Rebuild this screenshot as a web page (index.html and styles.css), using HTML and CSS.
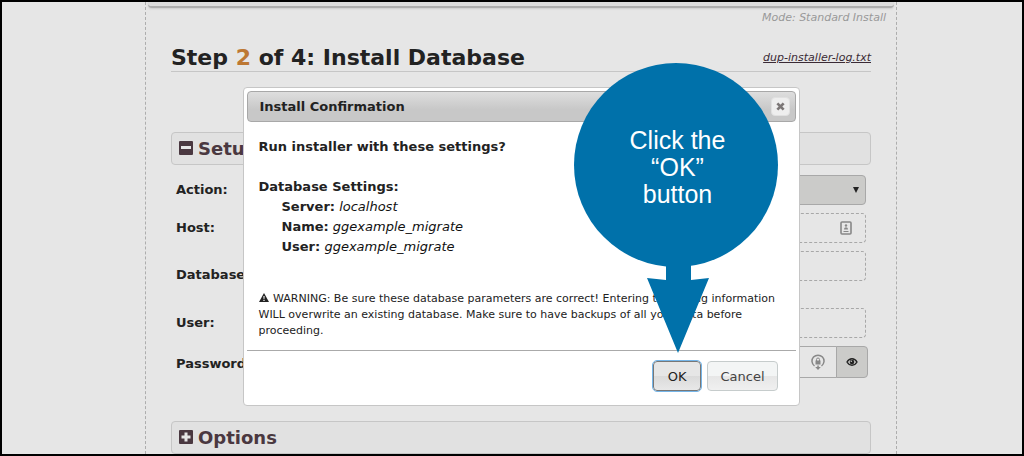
FILE: index.html
```html
<!DOCTYPE html>
<html lang="en">
  <head>
    <meta charset="UTF-8" />
    <meta name="viewport" content="width=device-width, initial-scale=1.0" />
    <title>Install Database</title>
    <link rel="stylesheet" href="styles.css" />
  </head>

  <body>
    <div class="content">
      <div class="header-bar"></div>
      <div class="mode">Mode: Standard Install</div>

      <main>
        <header class="step-header">
          <h1>Step <span class="step">2</span> of 4: Install Database</h1>
          <a class="log-link" href="#">dup-installer-log.txt</a>
        </header>

        <h2 class="section-title">
          <svg class="toggle" viewBox="0 0 14 14"><rect width="14" height="14" rx="1" fill="#4a3840" /><rect x="2" y="5" width="10" height="3" fill="#e6e6e6" /></svg>
          Setup
        </h2>

        <form class="settings">
          <div class="row">
            <label for="action">Action:</label>
            <div class="field">
              <select id="action">
                <option>Connect and Remove All Data</option>
              </select>
              <svg class="caret" viewBox="0 0 6 6"><path d="M0 0h6L3 6z" fill="#222" /></svg>
            </div>
          </div>
          <div class="row">
            <label for="host">Host:</label>
            <div class="field">
              <input type="text" id="host" />
              <svg class="field-icon" viewBox="0 0 12 14"><rect x="1" y="1" width="10" height="12" rx="1" fill="none" stroke="#888" stroke-width="1.6" /><circle cx="6" cy="4.5" r="1.2" fill="#888" /><path d="M4 8.5c0-3 4-3 4 0zM3.5 10h5v1h-5z" fill="#888" /></svg>
            </div>
          </div>
          <div class="row row-tall">
            <label for="database">Database:</label>
            <div class="field"><input type="text" id="database" /></div>
          </div>
          <div class="row">
            <label for="user">User:</label>
            <div class="field"><input type="text" id="user" /></div>
          </div>
          <div class="row row-password">
            <label for="password">Password:</label>
            <div class="field">
              <input type="password" id="password" />
              <svg class="key-icon" viewBox="0 0 14 16"><path d="M3.5 12A6 6 0 1 1 10.5 12" fill="none" stroke="#888" stroke-width="1.5" /><rect x="4.5" y="6.5" width="5" height="4" fill="#888" /><path d="M5.500 7V5.500a1.500 1.500 0 0 1 3 0V7" fill="none" stroke="#888" /><path d="M6.300 11.500h1.500v1.500h2l-2.800 3-2.800-3h2.100z" fill="#888" /></svg>
              <button type="button" class="show-btn" aria-label="Show password">
                <svg viewBox="0 0 12 10"><path d="M1 5c2.500-4.300 7.500-4.300 10 0-2.500 4.300-7.500 4.300-10 0z" fill="none" stroke="#222" stroke-width="1.400" /><circle cx="6" cy="5" r="2.300" fill="#222" /><circle cx="5.300" cy="4.200" r=".8" fill="#cbcbc9" /></svg>
              </button>
            </div>
          </div>
        </form>

        <h2 class="section-title">
          <svg class="toggle" viewBox="0 0 14 14"><rect width="14" height="14" rx="1" fill="#4a3840" /><path d="M5.500 2.500h3v3h3v3h-3v3h-3v-3h-3v-3h3z" fill="#e6e6e6" /></svg>
          Options
        </h2>
      </main>

      <div class="dialog" role="dialog" aria-labelledby="dialog-title">
        <div class="dialog-titlebar">
          <span id="dialog-title">Install Confirmation</span>
          <button type="button" class="close-btn" aria-label="Close">
            <svg viewBox="0 0 10 10"><path d="M1.500 1.500l7 7M8.500 1.500l-7 7" stroke="#7c7777" stroke-width="3" /></svg>
          </button>
        </div>

        <div class="dialog-body">
          <p class="question"><b>Run installer with these settings?</b></p>
          <b>Database Settings:</b>
          <ul>
            <li><b>Server:</b> <i>localhost</i></li>
            <li><b>Name:</b> <i>ggexample_migrate</i></li>
            <li><b>User:</b> <i>ggexample_migrate</i></li>
          </ul>
          <p class="warning">
            <svg viewBox="0 0 10 9"><path d="M5 0l5 9H0z" fill="#222" /><path d="M4.400 3h1.200l-.2 3h-.8zM4.400 6.700h1.200v1.200H4.400z" fill="#fff" /></svg>
            WARNING: Be sure these database parameters are correct! Entering the wrong information WILL overwrite an existing database. Make sure to have backups of all your data before proceeding.
          </p>
        </div>

        <div class="dialog-buttons">
          <button type="button" class="btn btn-ok">OK</button>
          <button type="button" class="btn">Cancel</button>
        </div>

        <div class="callout">
          <svg viewBox="0 0 204 290" fill="#0071aa"><circle cx="102" cy="102" r="102" /><path d="M92 200h25v17l18-2-31 75-31-75 19 2z" /></svg>
          <p>Click the<br />&ldquo;OK&rdquo;<br />button</p>
        </div>
      </div>
    </div>
  </body>
</html>
```

FILE: styles.css
```css
* {
  box-sizing: border-box;
}

body {
  margin: 0;
  min-height: 100vh;
  padding-left: 18px;
  border: 2px solid #000;
  background: #e6e6e6;
  color: #222;
  font-family: Verdana, "DejaVu Sans", sans-serif;
  font-size: 13px;
  display: flex;
  justify-content: center;
}

h1,
h2,
p,
ul {
  margin: 0;
  padding: 0;
}

svg {
  display: block;
}

.content {
  position: relative;
  width: 100%;
  max-width: 752px;
  border: 1px dashed #adadad;
  border-width: 0 1px;
}

.header-bar {
  height: 6px;
  margin: 0 2px;
  background: #dcdcdc;
  border-bottom: 2px solid #adadad;
  border-radius: 0 0 4px 4px;
  box-shadow: 0 1px 2px #ccc;
}

.mode {
  margin-top: 2px;
  padding-right: 10px;
  color: #999;
  font-size: 11px;
  font-style: italic;
  line-height: 16px;
  text-align: right;
}

main {
  padding: 0 25px;
}

/* Step heading */
.step-header {
  display: flex;
  justify-content: space-between;
  align-items: center;
  height: 28px;
  margin: 18px 0 60px;
  border-bottom: 1px solid #c6c6c6;
}

h1 {
  font-size: 22px;
}

.step {
  color: #bd7833;
}

.log-link {
  color: #3a2a35;
  font-size: 11px;
  font-style: italic;
}

/* Sections */
.section-title {
  display: flex;
  align-items: center;
  gap: 5px;
  height: 33px;
  padding: 0 7px 1px;
  border: 1px solid #c6c6c6;
  border-radius: 4px;
  background: #e1e1e1;
  color: #4a3840;
  font-size: 18px;
}

.toggle {
  width: 14px;
  height: 14px;
}

.settings {
  padding: 6px 5px 35px;
}

.row {
  display: flex;
  align-items: center;
  height: 38px;
}

.row label {
  width: 125px;
  padding-bottom: 2px;
  font-weight: bold;
}

.row-tall {
  height: 57px;
}

.row-tall .field {
  align-self: flex-start;
  margin-top: 4px;
}

.row-password {
  height: 44px;
}

.field {
  position: relative;
  flex: 1;
  display: flex;
}

.field input,
.field select {
  width: 100%;
  height: 30px;
  padding: 0 8px;
  border: 1px dashed #a8a8a8;
  border-radius: 4px;
  background: #e6e6e6;
  font: inherit;
}

.field select {
  appearance: none;
  border-style: solid;
  background: #cbcbc9;
}

.caret {
  position: absolute;
  top: 12px;
  right: 7px;
  width: 6px;
  height: 6px;
}

.field-icon {
  position: absolute;
  top: 8px;
  right: 14px;
  width: 12px;
  height: 14px;
}

.row-password .field {
  margin: 0 -2px 4px 0;
}

.row-password input {
  flex: 1;
  height: 32px;
  border: 1px solid #a8a8a8;
  border-radius: 4px 0 0 4px;
}

.key-icon {
  position: absolute;
  top: 8px;
  right: 43px;
  width: 14px;
  height: 16px;
}

.show-btn {
  width: 32px;
  height: 32px;
  margin-left: -1px;
  padding: 0 9px;
  border: 1px solid #a8a8a8;
  border-radius: 0 4px 4px 0;
  background: #cbcbc9;
}

/* Confirmation dialog */
.dialog {
  position: absolute;
  top: 85px;
  left: 0;
  right: 0;
  width: 557px;
  max-width: 100%;
  margin: 0 auto;
  padding: 3px;
  border: 1px solid #c6c6c6;
  border-radius: 4px;
  background: #fff;
}

.dialog-titlebar {
  display: flex;
  justify-content: space-between;
  align-items: center;
  height: 31px;
  padding: 0 5px 0 12px;
  border: 1px solid #a8a8a8;
  border-radius: 4px;
  background: linear-gradient(#dedede, #c8c8c8 60%);
  font-weight: bold;
}

.close-btn {
  width: 19px;
  height: 19px;
  padding: 4px;
  border: 1px solid #e0e0e0;
  border-radius: 4px;
  background: #eee;
}

.dialog-body {
  padding: 15px 12px 11px;
  line-height: 20px;
}

.question {
  margin-bottom: 20px;
}

.dialog-body ul {
  padding-left: 23px;
  list-style: none;
}

.dialog-body i {
  color: #111;
}

.warning {
  margin-top: 34px;
  font-size: 11px;
  line-height: 16px;
}

.warning svg {
  display: inline-block;
  width: 10px;
  height: 9px;
  margin-right: 1px;
}

.dialog-buttons {
  display: flex;
  justify-content: flex-end;
  gap: 6px;
  padding: 10px 18px 11px;
  border-top: 1px solid #aaa;
}

.btn {
  height: 30px;
  padding: 0 12px;
  border: 1px solid #c6cccc;
  border-radius: 4px;
  background: linear-gradient(#f3f5f5 50%, #e6e6e6 50%, #f0f0f0);
  color: #444;
  font: inherit;
}

.btn-ok {
  padding: 0 14px;
  border: 1px solid #777;
  outline: 1px solid #75b5e8;
  background: linear-gradient(#e6e6e6 50%, #dadada 50%, #e8e8e8);
  color: #222;
}

/* Callout bubble pointing at the OK button */
.callout {
  position: absolute;
  top: -25px;
  right: 21px;
  width: 204px;
}

.callout p {
  position: absolute;
  top: 64px;
  left: 4px;
  right: 0;
  color: #fff;
  font-family: Arial, "Liberation Sans", sans-serif;
  font-size: 25px;
  line-height: 27px;
  text-align: center;
}
```
